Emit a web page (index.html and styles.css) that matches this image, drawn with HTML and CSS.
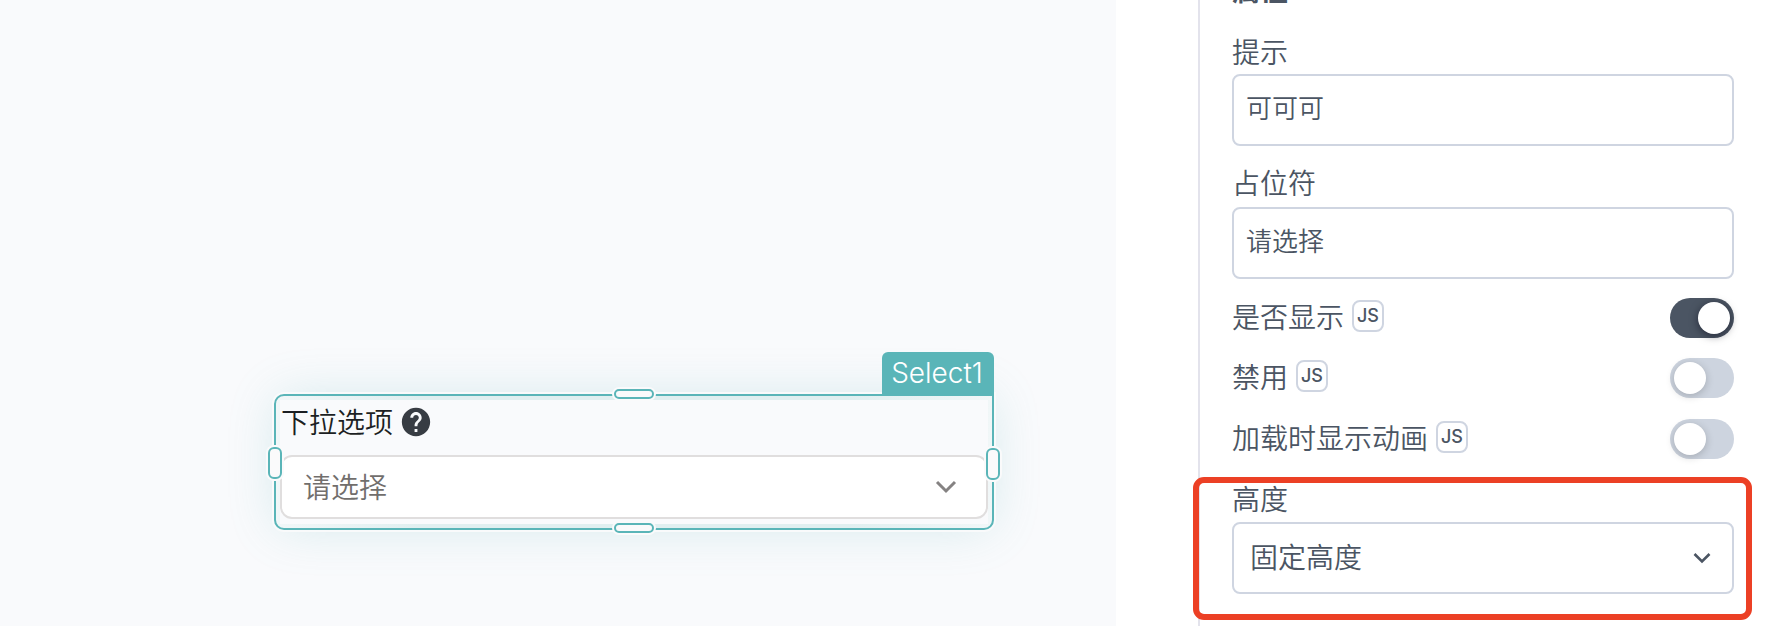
FILE: index.html
```
<!doctype html>
<html lang="zh-CN">
  <head>
    <meta charset="utf-8">
    <meta name="viewport" content="width=device-width">
    <title>Select1</title>
    <link rel="stylesheet" href="styles.css">
  </head>
  <body>
    <main class="canvas">
      <div class="widget">
        <div class="widget-body">
          <div class="widget-label">
            <span>下拉选项</span>
            <svg class="help" viewBox="0 0 24 24" width="34" height="34">
              <path fill="currentColor" d="M12 2C6.48 2 2 6.48 2 12s4.48 10 10 10 10-4.48 10-10S17.52 2 12 2zm1 17h-2v-2h2v2zm2.07-7.75-.9.92C13.45 12.9 13 13.5 13 15h-2v-.5c0-1.1.45-2.1 1.17-2.83l1.24-1.26c.37-.36.59-.86.59-1.41 0-1.1-.9-2-2-2s-2 .9-2 2H8c0-2.21 1.79-4 4-4s4 1.79 4 4c0 .88-.36 1.68-.93 2.25z"/>
            </svg>
          </div>
          <div class="widget-select">
            <span>请选择</span>
            <svg width="22" height="14" viewBox="0 0 22 14"><path d="M2 2l9 9 9-9" fill="none" stroke="#858282" stroke-width="3"/></svg>
          </div>
        </div>
        <div class="widget-name">Select1</div>
        <i class="handle handle-top"></i>
        <i class="handle handle-bottom"></i>
        <i class="handle handle-left"></i>
        <i class="handle handle-right"></i>
      </div>
    </main>

    <aside class="panel">
      <h2 class="panel-title">属性</h2>
      <div class="field field-tip">
        <label class="label">提示</label>
        <div class="input">可可可</div>
      </div>
      <div class="field field-placeholder">
        <label class="label">占位符</label>
        <div class="input">请选择</div>
      </div>
      <div class="rows">
        <div class="row">
          <span class="label">是否显示</span>
          <span class="js">JS</span>
          <span class="switch on"></span>
        </div>
        <div class="row">
          <span class="label">禁用</span>
          <span class="js">JS</span>
          <span class="switch"></span>
        </div>
        <div class="row row-last">
          <span class="label">加载时显示动画</span>
          <span class="js">JS</span>
          <span class="switch"></span>
        </div>
      </div>
      <div class="field field-height">
        <label class="label">高度</label>
        <div class="input select">
          <span>固定高度</span>
          <svg width="18" height="12" viewBox="0 0 18 12"><path d="M1.5 2L9 9.5 16.5 2" fill="none" stroke="#4b5563" stroke-width="2.6"/></svg>
        </div>
        <div class="mark"></div>
      </div>
    </aside>
  </body>
</html>
```
FILE: styles.css
```
* { box-sizing: border-box; }
html, body { margin: 0; padding: 0; height: 100%; }
body {
  display: flex;
  overflow: hidden;
  background: #fff;
  color: #4b5563;
  font-family: Inter, "Noto Sans CJK SC", sans-serif;
  font-size: 28px;
  font-weight: 350;
}
svg { display: block; flex: none; }

/* design canvas */
.canvas { width: 1116px; height: 626px; padding: 394px 0 0 274px; background: #f9fafc; }
.widget {
  position: relative;
  width: 720px;
  height: 136px;
  padding: 4px;
  border: 2px solid #5ab5b8;
  border-radius: 10px 0 10px 10px;
  background: linear-gradient(90deg, #f1f7f8, #e0eff0 20%, #e0eff0 80%, #f1f7f8);
  box-shadow: 0 0 0 2px #f9fafb, 0 0 50px -4px rgba(90, 181, 184, 0.24);
}
.widget-body { height: 124px; background: #f9fafc; }
.widget-label { display: flex; align-items: center; height: 44px; padding-left: 1px; color: #1c1f23; }
.widget-label span, .widget-select span { margin-top: -2px; }
.help { margin-left: 6px; color: #373c43; }
.widget-select {
  display: flex;
  align-items: center;
  justify-content: space-between;
  height: 64px;
  margin-top: 11px;
  padding: 0 29px 0 21px;
  border: 2px solid #e0dede;
  border-radius: 12px;
  background: #fff;
  color: #716e6c;
}
.widget-name {
  position: absolute;
  right: -2px;
  top: -44px;
  width: 112px;
  height: 44px;
  padding-right: 2px;
  border-radius: 6px 6px 0 0;
  background: #5ab5b8;
  color: #fff;
  font-weight: 300;
  line-height: 43px;
  text-align: center;
}
.handle {
  position: absolute;
  border: 2px solid #5ab5b8;
  background: #fafafb;
  box-shadow: 0 0 0 2px #fafafb;
}
.handle-top, .handle-bottom { left: 338px; width: 40px; height: 10px; border-radius: 5px; }
.handle-top { top: -7px; }
.handle-bottom { bottom: -5px; }
.handle-left, .handle-right { width: 14px; height: 32px; border-radius: 6px; }
.handle-left { left: -8px; top: 51px; }
.handle-right { right: -8px; top: 52px; }

/* property panel */
.panel { width: 576px; height: 626px; margin-left: 82px; padding: 0 40px 0 32px; border-left: 2px solid #e3e3ec; }
.panel-title { height: 40px; margin: -29px 0 0; font-size: 28px; font-weight: 700; line-height: 40px; }
.label { display: block; height: 40px; line-height: 40px; white-space: nowrap; }
.field-tip { margin-top: 21px; }
.field-tip .label { line-height: 42px; }
.field-placeholder { margin-top: 18px; }
.input {
  height: 72px;
  margin-top: 2px;
  padding: 0 12px;
  border: 2px solid #cfd5e1;
  border-radius: 8px;
  font-size: 26px;
  line-height: 66px;
}
.field-placeholder .input { margin-top: 3px; }
.rows { margin-top: 9px; }
.row { display: flex; align-items: center; height: 60px; }
.row-last { margin-top: 1px; }
.js {
  width: 32px;
  height: 32px;
  margin: -5px 0 0 8px;
  border: 2px solid #cfd5e1;
  border-radius: 8px;
  font-size: 18px;
  font-weight: 500;
  line-height: 28px;
  text-align: center;
}
.switch { width: 64px; height: 40px; margin-left: auto; padding: 4px; border-radius: 20px; background: #cdd4df; }
.switch::before {
  content: "";
  display: block;
  width: 32px;
  height: 32px;
  border-radius: 50%;
  background: #fff;
  box-shadow: 0 2px 8px rgba(0, 0, 0, 0.2);
}
.switch.on { background: #4b5563; }
.switch.on::before { margin-left: 24px; box-shadow: 0 2px 8px rgba(0, 0, 20, 0.5); }
.field-height { position: relative; margin-top: 11px; }
.select { display: flex; align-items: center; justify-content: space-between; padding: 0 21px 0 16px; font-size: 28px; }
.mark {
  position: absolute;
  left: -39px;
  top: -3px;
  width: 559px;
  height: 143px;
  border: 6px solid #ec4025;
  border-radius: 11px;
}
```
